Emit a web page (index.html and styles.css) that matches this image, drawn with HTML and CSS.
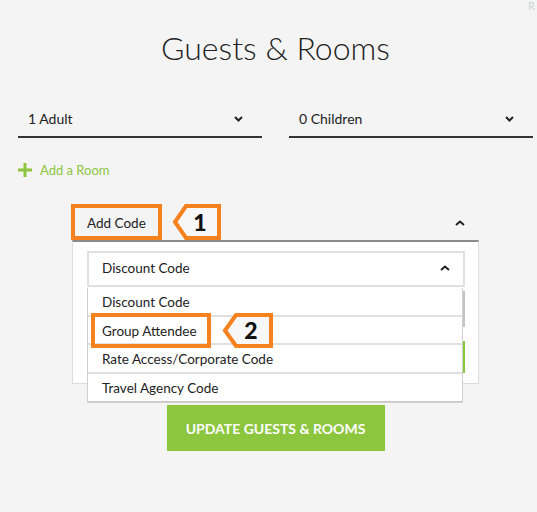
FILE: index.html
```html
<!DOCTYPE html>
<html lang="en">
<head>
  <meta charset="UTF-8" />
  <title>Guests &amp; Rooms</title>
  <link rel="stylesheet" href="styles.css">
</head>
<body>
  <span class="corner">R</span>

  <div class="page">
    <h1 class="title">Guests &amp; Rooms</h1>

    <div class="guest-row">
      <div class="select-line">
        <span>1 Adult</span>
        <svg class="chev" width="9" height="6" viewBox="0 0 9 6"><path d="M1 1 L4.5 4.5 L8 1" fill="none" stroke="#222" stroke-width="2"/></svg>
      </div>
      <div class="select-line">
        <span>0 Children</span>
        <svg class="chev" width="9" height="6" viewBox="0 0 9 6"><path d="M1 1 L4.5 4.5 L8 1" fill="none" stroke="#222" stroke-width="2"/></svg>
      </div>
    </div>

    <div class="add-room">
      <svg width="14" height="14" viewBox="0 0 14 14"><path d="M7 0 V14 M0 7 H14" stroke="#8cc63f" stroke-width="3"/></svg>
      <span>Add a Room</span>
    </div>

    <div class="code-section">
      <div class="code-header">
        <span>Add Code</span>
        <svg width="10" height="6" viewBox="0 0 10 6"><path d="M1 5 L5 1.5 L9 5" fill="none" stroke="#222" stroke-width="2"/></svg>
      </div>

      <div class="code-panel">
        <div class="code-select">
          <span>Discount Code</span>
          <svg width="10" height="6" viewBox="0 0 10 6"><path d="M1 5 L5 1.5 L9 5" fill="none" stroke="#222" stroke-width="2"/></svg>
        </div>
        <div class="code-input"></div>
        <div class="apply-btn"></div>

        <ul class="code-options">
          <li>Discount Code</li>
          <li>Group Attendee</li>
          <li>Rate Access/Corporate Code</li>
          <li>Travel Agency Code</li>
        </ul>
      </div>

      <!-- callouts -->
      <div class="mark mark-1"></div>
      <svg class="tag tag-1" width="49" height="36" viewBox="0 0 49 36">
        <path d="M3 18 L14 2 L47 2 L47 34 L14 34 Z" fill="#f7f7f7" stroke="#f5821f" stroke-width="4"/>
        <text x="28" y="27" text-anchor="middle">1</text>
      </svg>
      <div class="mark mark-2"></div>
      <svg class="tag tag-2" width="51" height="35" viewBox="0 0 51 35">
        <path d="M3 17.5 L14 2 L49 2 L49 33 L14 33 Z" fill="#f7f7f7" stroke="#f5821f" stroke-width="4"/>
        <text x="29" y="26" text-anchor="middle">2</text>
      </svg>
    </div>

    <button class="update-btn">Update Guests &amp; Rooms</button>
  </div>
</body>
</html>
```

FILE: styles.css
```css
* {
  margin: 0;
  padding: 0;
  box-sizing: border-box;
}

body {
  font-family: 'Lato', 'Open Sans', sans-serif;
  background: #f4f4f4;
  color: #222;
  min-height: 100vh;
  position: relative;
  overflow: hidden;
}

.corner {
  position: absolute;
  top: 0;
  right: 2px;
  font-size: 11px;
  line-height: 11px;
  color: #cdd6d6;
}

.page {
  padding: 28px 4px 0 18px;
}

.title {
  font-size: 32px;
  font-weight: 300;
  text-align: center;
  color: #222;
  line-height: 40px;
}

.guest-row {
  display: flex;
  gap: 27px;
  margin-top: 34px;
}

.select-line {
  flex: 1;
  display: flex;
  align-items: center;
  justify-content: space-between;
  padding: 8px 19px 9px 10px;
  font-size: 14px;
  border-bottom: 2px solid #333;
}

.add-room {
  display: flex;
  align-items: center;
  gap: 8px;
  margin-top: 24px;
  font-size: 13px;
  color: #8cc63f;
}

.code-section {
  position: relative;
  width: 407px;
  margin: 27px auto 0;
}

.code-header {
  height: 35px;
  display: flex;
  align-items: center;
  justify-content: space-between;
  padding: 0 14px 0 15px;
  font-size: 13.5px;
}

.code-panel {
  position: relative;
  background: #fff;
  border: 1px solid #dcdcdc;
  border-top: 2px solid #8a8a8a;
  padding: 9px 13px 10px 14px;
}

.code-select {
  height: 36px;
  display: flex;
  align-items: center;
  justify-content: space-between;
  padding: 0 13px 2px 13px;
  border: 2px solid #e0e0e0;
  font-size: 13.5px;
}

.code-input {
  height: 36px;
  margin-top: 4px;
  border: 2px solid #c4c4c4;
}

.apply-btn {
  height: 32px;
  margin-top: 14px;
  background: #8cc63f;
}

.code-options {
  list-style: none;
  position: absolute;
  top: 46px;
  left: 14px;
  right: 15px;
  background: #fff;
  border: 1px solid #d0d0d0;
  border-top: none;
  font-size: 13.5px;
}

.code-options li {
  height: 28.5px;
  display: flex;
  align-items: center;
  padding: 2px 0 0 14px;
  border-bottom: 2px solid #e0e0e0;
}

.code-options li:last-child {
  border-bottom: 1px solid #c8c8c8;
}

.mark {
  position: absolute;
  border: 4px solid #f5821f;
}

.mark-1 {
  left: -1px;
  top: -1px;
  width: 91px;
  height: 36px;
}

.mark-2 {
  left: 19px;
  top: 108px;
  width: 120px;
  height: 35px;
}

.tag {
  position: absolute;
}

.tag text {
  font-family: 'Lato', sans-serif;
  font-weight: 900;
  font-size: 23px;
  fill: #111;
}

.tag-1 {
  left: 100px;
  top: -1px;
}

.tag-2 {
  left: 150px;
  top: 108px;
}

.update-btn {
  display: block;
  width: 218px;
  height: 46px;
  margin: 21px auto 0;
  background: #8cc63f;
  color: #fff;
  border: none;
  font-family: 'Lato', sans-serif;
  font-weight: 700;
  font-size: 14px;
  text-transform: uppercase;
}
```
